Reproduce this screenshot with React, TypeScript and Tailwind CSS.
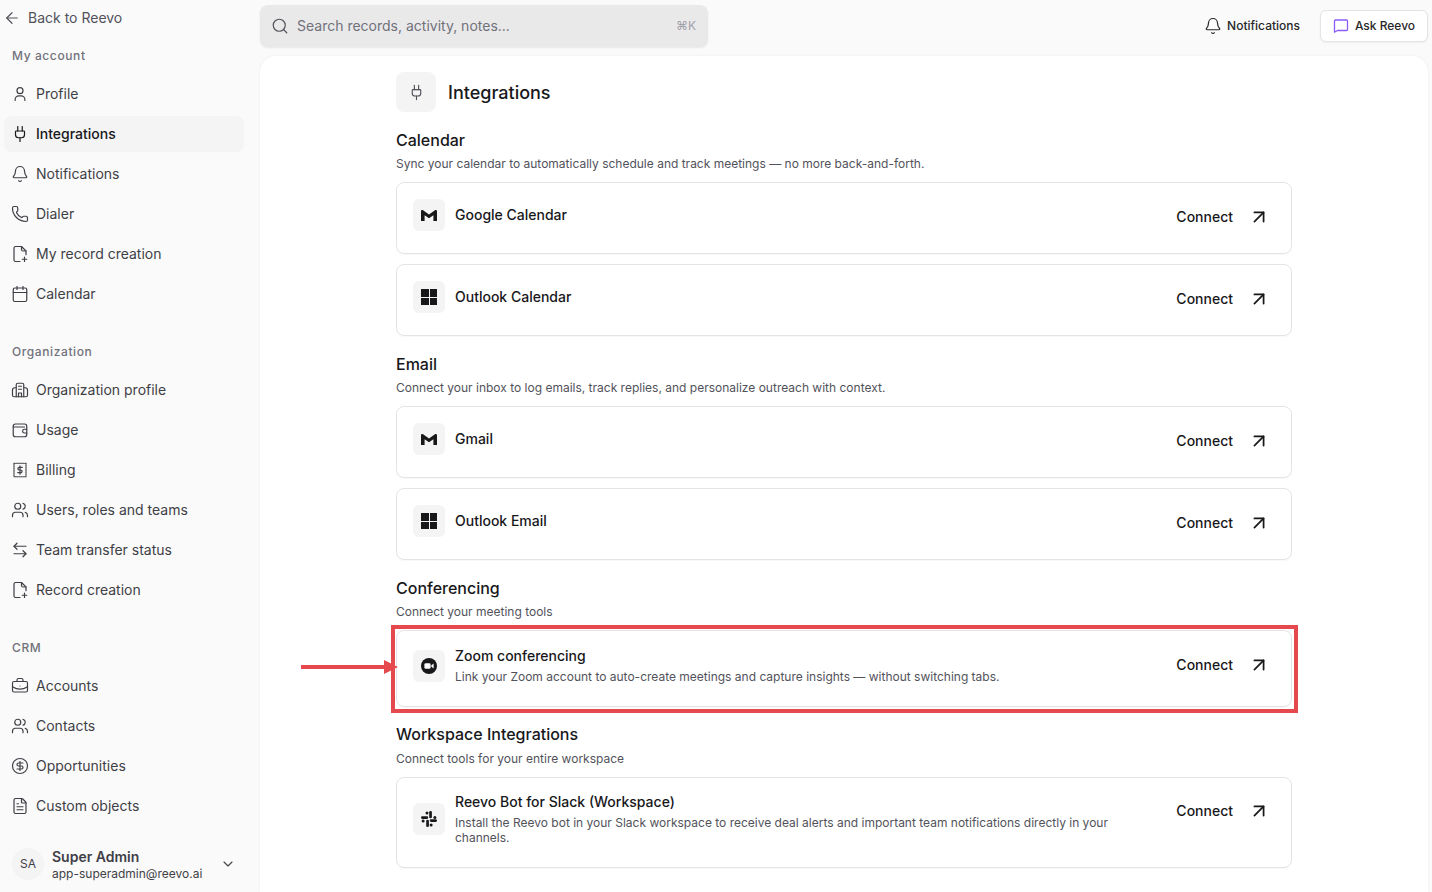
import React from 'react';
import {
  ArrowLeft,
  ArrowLeftRight,
  ArrowUpRight,
  Bell,
  BriefcaseBusiness,
  Calendar,
  ChevronDown,
  CircleDollarSign,
  FileText,
  Phone,
  Plug,
  Search,
  Users,
} from 'lucide-react';

type IconProps = { size?: number; strokeWidth?: number; className?: string };

const ProfileUser: React.FC<IconProps> = ({ size = 18, strokeWidth = 1.6, className }) => (
  <svg width={size} height={size} viewBox="0 0 24 24" fill="none" stroke="currentColor" strokeWidth={strokeWidth} strokeLinecap="round" strokeLinejoin="round" className={className}>
    <circle cx="12" cy="7.5" r="4" />
    <path d="M5.5 20.5v-1a5 5 0 0 1 5-5h3a5 5 0 0 1 5 5v1" />
  </svg>
);

const FileAdd: React.FC<IconProps> = ({ size = 18, strokeWidth = 1.6, className }) => (
  <svg width={size} height={size} viewBox="0 0 24 24" fill="none" stroke="currentColor" strokeWidth={strokeWidth} strokeLinecap="round" strokeLinejoin="round" className={className}>
    <path d="M12 22H6a2 2 0 0 1-2-2V4a2 2 0 0 1 2-2h8l6 6v5" />
    <path d="M14 2v4a2 2 0 0 0 2 2h4" />
    <path d="M18 16v6M15 19h6" />
  </svg>
);

const OrgBuilding: React.FC<IconProps> = ({ size = 18, strokeWidth = 1.6, className }) => (
  <svg width={size} height={size} viewBox="0 0 24 24" fill="none" stroke="currentColor" strokeWidth={strokeWidth} strokeLinecap="round" strokeLinejoin="round" className={className}>
    <path d="M7 21V5a2 2 0 0 1 2-2h6a2 2 0 0 1 2 2v16" />
    <path d="M7 9H5a3 3 0 0 0-3 3v7a2 2 0 0 0 2 2h16a2 2 0 0 0 2-2v-7a3 3 0 0 0-3-3h-2" />
    <path d="M10 7h4M10 11h4M10 21v-5h4v5" />
  </svg>
);

const UsageWallet: React.FC<IconProps> = ({ size = 18, strokeWidth = 1.6, className }) => (
  <svg width={size} height={size} viewBox="0 0 24 24" fill="none" stroke="currentColor" strokeWidth={strokeWidth} strokeLinecap="round" strokeLinejoin="round" className={className}>
    <path d="M21 11V7a3 3 0 0 0-3-3H6a3 3 0 0 0-3 3v11a3 3 0 0 0 3 3h12a3 3 0 0 0 3-3v-2" />
    <path d="M3 8h15" />
    <path d="M21 11h-3a2.5 2.5 0 0 0 0 5h3z" />
  </svg>
);

const BillingStamp: React.FC<IconProps> = ({ size = 18, strokeWidth = 1.6, className }) => (
  <svg width={size} height={size} viewBox="0 0 24 24" fill="none" stroke="currentColor" strokeWidth={strokeWidth} strokeLinecap="round" strokeLinejoin="round" className={className}>
    <path d="M4 3h16v18H4z" strokeDasharray="1.6 1.4" />
    <path d="M15 8.5h-4a1.75 1.75 0 0 0 0 3.5h2a1.75 1.75 0 0 1 0 3.5H9M12 6.5v11" />
  </svg>
);

const GmailMark = () => (
  <svg width="16" height="11" viewBox="0 0 16 12" fill="#18181b" preserveAspectRatio="none">
    <path d="M0 1.4C0 .3 1.2-.3 2.1.4L8 4.8 13.9.4C14.8-.3 16 .3 16 1.4V12h-3.6V5.6L8 9 3.6 5.6V12H0z" />
  </svg>
);

const WindowsMark = () => (
  <div className="grid h-4 w-4 grid-cols-2 gap-px">
    <span className="bg-[#18181b]" />
    <span className="bg-[#18181b]" />
    <span className="bg-[#18181b]" />
    <span className="bg-[#18181b]" />
  </div>
);

const ZoomMark = () => (
  <svg width="16" height="16" viewBox="0 0 16 16">
    <circle cx="8" cy="8" r="8" fill="#18181b" />
    <rect x="3.4" y="5.2" width="6.2" height="5.6" rx="1.4" fill="#fff" />
    <path d="M10.2 7.4 12.6 5.6v4.8L10.2 8.6z" fill="#fff" />
  </svg>
);

const SlackMark = () => (
  <svg width="16" height="16" viewBox="0 0 16 16" fill="#18181b">
    <rect x="0" y="5.2" width="7.2" height="2.7" rx="1.3" />
    <circle cx="6" cy="2.1" r="1.5" />
    <rect x="8.2" y="0" width="2.7" height="7.2" rx="1.3" />
    <circle cx="13.9" cy="6.5" r="1.5" />
    <rect x="8.8" y="8.2" width="7.2" height="2.7" rx="1.3" />
    <circle cx="10.1" cy="13.9" r="1.5" />
    <rect x="5.2" y="8.8" width="2.7" height="7.2" rx="1.3" />
    <circle cx="2.1" cy="10" r="1.5" />
  </svg>
);

const accountItems = [
  { label: 'Profile', icon: ProfileUser },
  { label: 'Integrations', icon: Plug, active: true },
  { label: 'Notifications', icon: Bell },
  { label: 'Dialer', icon: Phone },
  { label: 'My record creation', icon: FileAdd },
  { label: 'Calendar', icon: Calendar },
];

const orgItems = [
  { label: 'Organization profile', icon: OrgBuilding },
  { label: 'Usage', icon: UsageWallet },
  { label: 'Billing', icon: BillingStamp },
  { label: 'Users, roles and teams', icon: Users },
  { label: 'Team transfer status', icon: ArrowLeftRight },
  { label: 'Record creation', icon: FileAdd },
];

const crmItems = [
  { label: 'Accounts', icon: BriefcaseBusiness },
  { label: 'Contacts', icon: Users },
  { label: 'Opportunities', icon: CircleDollarSign },
  { label: 'Custom objects', icon: FileText },
];

const NavSection: React.FC<{ title: string; items: typeof accountItems }> = ({ title, items }) => (
  <div className="mb-5">
    <div className="flex h-10 items-center pl-2 text-xs font-medium tracking-[0.6px] text-[#71717a]">{title}</div>
    <div className="flex flex-col gap-1">
      {items.map(({ label, icon: Icon, active }) => (
        <div
          key={label}
          className={
            active
              ? 'flex h-9 items-center gap-[7px] rounded-lg bg-[#f4f4f5] pl-[7px] text-sm font-medium text-[#18181b]'
              : 'flex h-9 items-center gap-[7px] rounded-lg pl-[7px] text-sm text-[#3f3f46]'
          }
        >
          <Icon size={18} strokeWidth={1.6} className="shrink-0" />
          {label}
        </div>
      ))}
    </div>
  </div>
);

const IntegrationCard: React.FC<{ logo: React.ReactNode; name: string; description?: string; pad?: string }> = ({
  logo,
  name,
  description,
  pad = 'pt-4',
}) => (
  <div className={`flex items-start justify-between rounded-lg border border-[#e4e4e7] pr-[21px] pl-4 shadow-[0_1px_1px_rgba(0,0,0,0.03)] ${pad}`}>
    <div className="flex items-center gap-2.5 pb-[22px]">
      <div className="flex h-8 w-8 shrink-0 items-center justify-center rounded-md bg-[#f4f4f5]">{logo}</div>
      <div className="w-[690px]">
        <div className="text-sm leading-[18px] font-medium text-[#18181b]">{name}</div>
        {description && <p className="mt-1 text-xs leading-[15px] text-[#52525b]">{description}</p>}
      </div>
    </div>
    <div className="flex h-9 items-center gap-[15px] text-sm font-medium text-[#18181b]">
      Connect
      <ArrowUpRight size={22} strokeWidth={1.9} />
    </div>
  </div>
);

const SectionHead: React.FC<{ title: string; description: string; className?: string; descGap?: string }> = ({
  title,
  description,
  className,
  descGap = 'mt-1',
}) => (
  <div className={className}>
    <h2 className="text-base leading-6 font-medium text-[#18181b]">{title}</h2>
    <p className={`text-xs leading-4 text-[#52525b] ${descGap}`}>{description}</p>
  </div>
);

export default function App() {
  return (
    <div className="flex h-screen overflow-hidden bg-[#fafafa] font-['Inter',sans-serif]">
      <aside className="flex w-[260px] shrink-0 flex-col px-1 pr-4">
        <div className="flex h-9 items-center gap-[7px] text-sm text-[#52525b]">
          <ArrowLeft size={18} strokeWidth={1.6} className="-ml-[1px]" />
          Back to Reevo
        </div>
        <NavSection title="My account" items={accountItems} />
        <NavSection title="Organization" items={orgItems} />
        <NavSection title="CRM" items={crmItems} />
        <div className="mt-auto mb-3 flex h-8 items-center pl-2">
          <div className="flex h-8 w-8 items-center justify-center rounded-full bg-[#f4f4f5] text-xs text-[#3f3f46]">SA</div>
          <div className="mt-0.5 ml-2 w-[168px]">
            <div className="text-sm leading-4 font-semibold text-[#3f3f46]">Super Admin</div>
            <div className="mt-px text-xs leading-4 text-[#3f3f46]">app-superadmin@reevo.ai</div>
          </div>
          <ChevronDown size={16} strokeWidth={1.6} className="text-[#3f3f46]" />
        </div>
      </aside>

      <div className="flex min-w-0 flex-1 flex-col pr-1">
        <header className="mb-1 flex h-[52px] shrink-0 items-center justify-between">
          <div className="flex h-[42px] w-[448px] items-center rounded-lg bg-[#e9e9ea] pr-3 pl-[11px] shadow-[0_1px_2px_rgba(0,0,0,0.08)]">
            <Search size={18} strokeWidth={1.6} className="text-[#52525b]" />
            <span className="ml-2 text-sm text-[#71717a]">Search records, activity, notes...</span>
            <span className="ml-auto text-xs text-[#a1a1aa]">⌘K</span>
          </div>
          <div className="flex items-center gap-5">
            <div className="flex items-center gap-[5px] text-xs font-medium text-[#27272a]">
              <Bell size={18} strokeWidth={1.6} />
              Notifications
            </div>
            <div className="flex h-8 w-[108px] items-center justify-center gap-1.5 rounded-md border border-[#e4e4e7] bg-white text-xs font-medium text-[#27272a] shadow-[0_1px_2px_rgba(0,0,0,0.05)]">
              <svg width="16" height="16" viewBox="0 0 16 16" fill="none" stroke="#8b5cf6" strokeWidth="1.3" strokeLinejoin="round">
                <path d="M1.5 3a1 1 0 0 1 1-1h11a1 1 0 0 1 1 1v8.5a1 1 0 0 1-1 1H4.5l-3 1.6z" />
              </svg>
              Ask Reevo
            </div>
          </div>
        </header>

        <main className="flex-1 overflow-hidden rounded-t-2xl bg-white pt-4 shadow-[0_0_3px_rgba(0,0,0,0.06)]">
          <div className="mx-auto w-[896px]">
            <div className="flex items-center gap-3">
              <div className="flex h-10 w-10 items-center justify-center rounded-lg bg-[#f4f4f5]">
                <Plug size={17} strokeWidth={1.6} className="text-[#52525b]" />
              </div>
              <h1 className="mt-0.5 text-lg font-medium text-[#18181b]">Integrations</h1>
            </div>

            <SectionHead className="mt-4 mb-2.5" title="Calendar" description="Sync your calendar to automatically schedule and track meetings — no more back-and-forth." />
            <div className="flex flex-col gap-2.5">
              <IntegrationCard logo={<GmailMark />} name="Google Calendar" />
              <IntegrationCard logo={<WindowsMark />} name="Outlook Calendar" />
            </div>

            <SectionHead className="mt-4 mb-2.5" title="Email" description="Connect your inbox to log emails, track replies, and personalize outreach with context." />
            <div className="flex flex-col gap-2.5">
              <IntegrationCard logo={<GmailMark />} name="Gmail" />
              <IntegrationCard logo={<WindowsMark />} name="Outlook Email" />
            </div>

            <SectionHead className="mt-4 mb-2.5" title="Conferencing" description="Connect your meeting tools" />
            <div className="relative">
              <IntegrationCard logo={<ZoomMark />} name="Zoom conferencing" description="Link your Zoom account to auto-create meetings and capture insights — without switching tabs." />
              <div className="pointer-events-none absolute -top-[5px] -right-[6px] -bottom-[6px] -left-[5px] border-4 border-[#e5484d]" />
              <svg className="absolute top-[26px] -left-[95px]" width="97" height="22" viewBox="0 0 97 22" fill="#e5484d">
                <rect x="0" y="9" width="90" height="4" />
                <path d="M83 4 97 11 83 18z" />
              </svg>
            </div>

            <SectionHead className="mt-[15px] mb-2.5" descGap="mt-[5px]" title="Workspace Integrations" description="Connect tools for your entire workspace" />
            <IntegrationCard
              pad="pt-[15px]"
              logo={<SlackMark />}
              name="Reevo Bot for Slack (Workspace)"
              description="Install the Reevo bot in your Slack workspace to receive deal alerts and important team notifications directly in your channels."
            />
          </div>
        </main>
      </div>
    </div>
  );
}
